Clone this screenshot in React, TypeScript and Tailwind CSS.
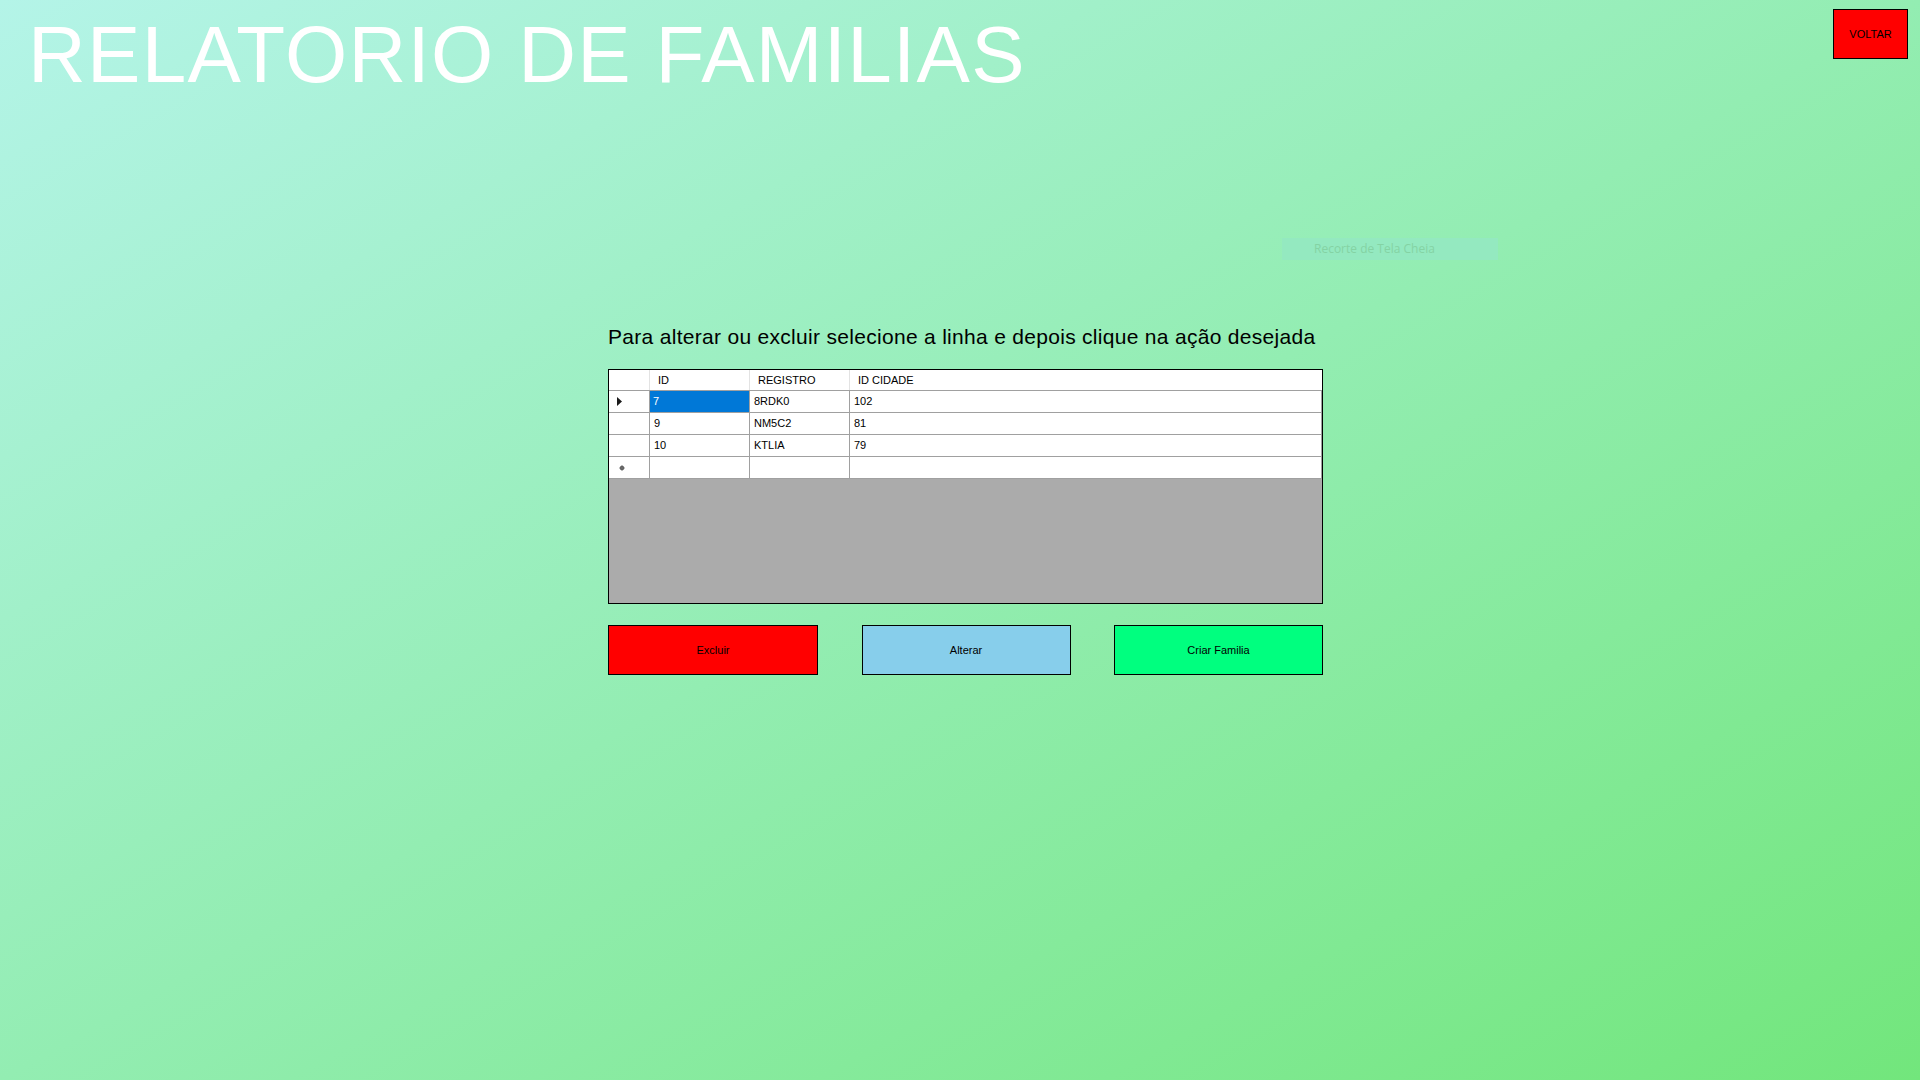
import React from "react";

const rows = [
  { id: "7", reg: "8RDK0", cid: "102", selected: true },
  { id: "9", reg: "NM5C2", cid: "81" },
  { id: "10", reg: "KTLIA", cid: "79" },
];

function Arrow() {
  return (
    <svg width="6" height="9" viewBox="0 0 6 9">
      <path d="M0 0 L5 4.5 L0 9 Z" fill="#1a1a1a" />
    </svg>
  );
}

function Star() {
  return (
    <svg width="6" height="6" viewBox="0 0 6 6">
      <circle cx="3" cy="3" r="2.2" fill="#555" />
      <path d="M3 0 V6 M0 3 H6" stroke="#777" strokeWidth="0.8" />
    </svg>
  );
}

export default function App() {
  const font = { fontFamily: '"Liberation Sans", Arial, sans-serif' };
  return (
    <div
      className="relative h-[1080px] w-full overflow-hidden bg-[linear-gradient(to_bottom_right,#b4f4e8,#72e67c)]"
      style={font}
    >
      <div className="flex items-start justify-between pl-[28px] pr-[12px]">
        <h1 className="mt-[15px] text-[80px] leading-[80px] font-normal tracking-[1.3px] text-white">
          RELATORIO DE FAMILIAS
        </h1>
        <button className="mt-[9px] flex h-[50px] w-[75px] items-center justify-center border border-black bg-[#ff0000] text-[11px] text-black">
          VOLTAR
        </button>
      </div>

      <div
        className="absolute left-[1282px] top-[238px] flex h-[22px] w-[216px] items-center bg-[#94e9c0] pl-[32px] text-[12px] text-[#84d3a4]"
        style={{ fontFamily: '"Open Sans", "Noto Sans", sans-serif' }}
      >
        Recorte de Tela Cheia
      </div>

      <div className="ml-[608px] mt-[230px] w-[715px]">
        <p className="text-[21px] leading-[23px] tracking-[0.3px] text-black">
          Para alterar ou excluir selecione a linha e depois clique na ação desejada
        </p>

        <div className="mt-[21px] flex h-[235px] flex-col border border-black bg-[#ababab] text-[11px] text-black">
          <div className="grid h-[21px] grid-cols-[41px_100px_100px_1fr] border-b border-[#a0a0a0] bg-white">
            <div className="border-r border-[#e3e3e3]" />
            <div className="flex items-center border-r border-[#e3e3e3] pl-[8px]">ID</div>
            <div className="flex items-center border-r border-[#e3e3e3] pl-[8px]">REGISTRO</div>
            <div className="flex items-center pl-[8px]">ID CIDADE</div>
          </div>
          {rows.map((r) => (
            <div
              key={r.id}
              className="grid h-[22px] grid-cols-[41px_100px_100px_1fr] border-b border-[#a0a0a0] bg-white"
            >
              <div className="flex items-center border-r border-[#a0a0a0] pl-[8px]">
                {r.selected ? <Arrow /> : null}
              </div>
              <div
                className={
                  r.selected
                    ? "flex items-center border-r border-[#a0a0a0] bg-[#0078d7] pl-[3px] text-white"
                    : "flex items-center border-r border-[#a0a0a0] pl-[4px]"
                }
              >
                {r.id}
              </div>
              <div className="flex items-center border-r border-[#a0a0a0] pl-[4px]">{r.reg}</div>
              <div className="flex items-center border-r border-[#a0a0a0] pl-[4px]">{r.cid}</div>
            </div>
          ))}
          <div className="grid h-[22px] grid-cols-[41px_100px_100px_1fr] border-b border-[#a0a0a0] bg-white">
            <div className="flex items-center border-r border-[#a0a0a0] pl-[10px]">
              <Star />
            </div>
            <div className="border-r border-[#a0a0a0]" />
            <div className="border-r border-[#a0a0a0]" />
            <div className="border-r border-[#a0a0a0]" />
          </div>
          <div className="flex-1" />
        </div>

        <div className="mt-[21px] flex justify-between">
          <button className="flex h-[50px] w-[210px] items-center justify-center border border-black bg-[#ff0000] text-[11px] text-black">
            Excluir
          </button>
          <button className="flex h-[50px] w-[209px] items-center justify-center border border-black bg-[#87ceeb] text-[11px] text-black">
            Alterar
          </button>
          <button className="flex h-[50px] w-[209px] items-center justify-center border border-black bg-[#00ff7f] text-[11px] text-black">
            Criar Familia
          </button>
        </div>
      </div>
    </div>
  );
}
